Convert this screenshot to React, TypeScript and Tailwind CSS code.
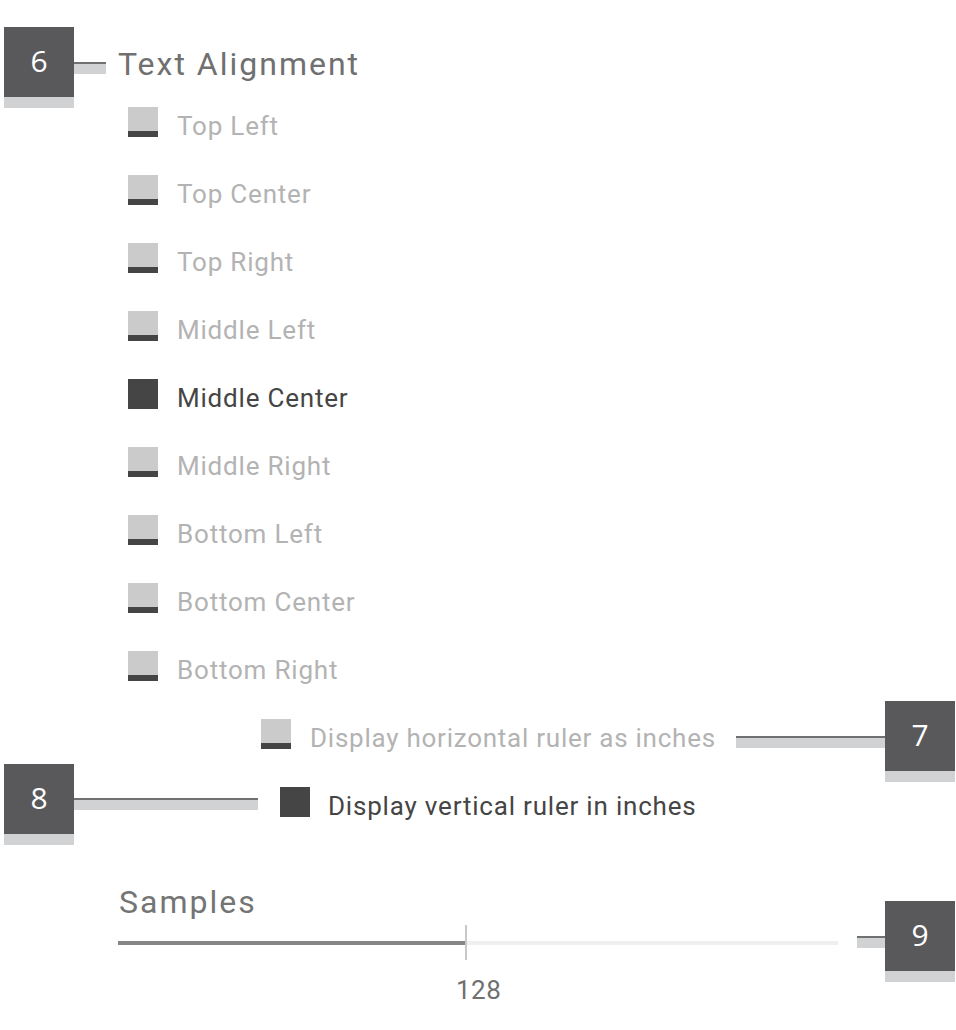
import React from 'react';

const options = [
  'Top Left',
  'Top Center',
  'Top Right',
  'Middle Left',
  'Middle Center',
  'Middle Right',
  'Bottom Left',
  'Bottom Center',
  'Bottom Right',
];

const selected = 'Middle Center';

function Callout({ n }: { n: number }) {
  return (
    <div className="flex w-[70px] shrink-0 flex-col">
      <div className="flex h-[70px] items-center justify-center bg-[#59595b] pb-[2px] font-['Open_Sans',sans-serif] text-[30px] leading-none text-white">
        {n}
      </div>
      <div className="h-[11px] bg-[#d1d2d4]" />
    </div>
  );
}

function Connector({ className }: { className?: string }) {
  return (
    <div className={'flex flex-col ' + (className ?? '')}>
      <div className="h-[2px] bg-[#6f7072]" />
      <div className="h-[10px] bg-[#d1d2d4]" />
    </div>
  );
}

function Checkbox({ checked }: { checked: boolean }) {
  if (checked) {
    return <div className="h-[30px] w-[30px] shrink-0 bg-[#454545]" />;
  }
  return (
    <div className="flex h-[30px] w-[30px] shrink-0 flex-col bg-[#cbcbcb]">
      <div className="flex-1" />
      <div className="h-[6px] bg-[#454545]" />
    </div>
  );
}

export default function App() {
  return (
    <div className="h-[1030px] w-[956px] overflow-hidden bg-white pt-[27px] font-['Roboto',sans-serif]">
      {/* Heading 6 */}
      <div className="flex h-[80px] items-start">
        <div className="ml-[4px]">
          <Callout n={6} />
        </div>
        <Connector className="mt-[35px] w-[32px]" />
        <div className="ml-[12px] mt-[21px] text-[32px] leading-[32px] tracking-[2px] text-[#707070]">
          Text Alignment
        </div>
      </div>

      {/* Alignment options */}
      <div className="flex flex-col">
        {options.map((o) => {
          const on = o === selected;
          return (
            <div key={o} className="flex h-[68px] items-start pl-[128px]">
              <Checkbox checked={on} />
              <div
                className={
                  'ml-[19px] mt-[6px] text-[26px] leading-[26px] tracking-[0.8px] ' +
                  (on ? 'text-[#454545]' : 'text-[#b3b3b3]')
                }
              >
                {o}
              </div>
            </div>
          );
        })}
      </div>

      {/* 7: horizontal ruler */}
      <div className="flex h-[45px] items-start pl-[261px] pr-[1px]">
        <Checkbox checked={false} />
        <div className="ml-[19px] mt-[6px] whitespace-nowrap text-[26px] leading-[26px] tracking-[0.75px] text-[#b3b3b3]">
          Display horizontal ruler as inches
        </div>
        <Connector className="ml-[20px] mt-[17px] flex-1" />
        <div className="-mt-[18px]">
          <Callout n={7} />
        </div>
      </div>

      {/* 8: vertical ruler */}
      <div className="flex h-[81px] items-start">
        <div className="ml-[4px]">
          <Callout n={8} />
        </div>
        <Connector className="mt-[34px] w-[184px]" />
        <div className="ml-[22px] mt-[23px]">
          <Checkbox checked />
        </div>
        <div className="ml-[18px] mt-[29px] whitespace-nowrap text-[26px] leading-[26px] tracking-[0.8px] text-[#454545]">
          Display vertical ruler in inches
        </div>
      </div>

      {/* Samples */}
      <div className="ml-[119px] mt-[41px] text-[32px] leading-[32px] tracking-[2px] text-[#747474]">
        Samples
      </div>
      <div className="flex items-start pr-[1px]">
        <div className="ml-[118px] flex w-[720px] flex-col pt-[7px]">
          <div className="relative flex h-[35px] items-center">
            <div className="flex h-[4px] w-full">
              <div className="w-[348px] bg-[#868686]" />
              <div className="flex-1 bg-[#efefef]" />
            </div>
            <div className="absolute left-[347px] top-0 h-full w-[2px] bg-[#c8c8c8]" />
          </div>
          <div className="ml-[338px] mt-[17px] text-[26px] leading-[26px] tracking-[0.5px] text-[#707070]">128</div>
        </div>
        <Connector className="ml-[19px] mt-[18px] w-[28px]" />
        <div className="-mt-[17px]">
          <Callout n={9} />
        </div>
      </div>
    </div>
  );
}
